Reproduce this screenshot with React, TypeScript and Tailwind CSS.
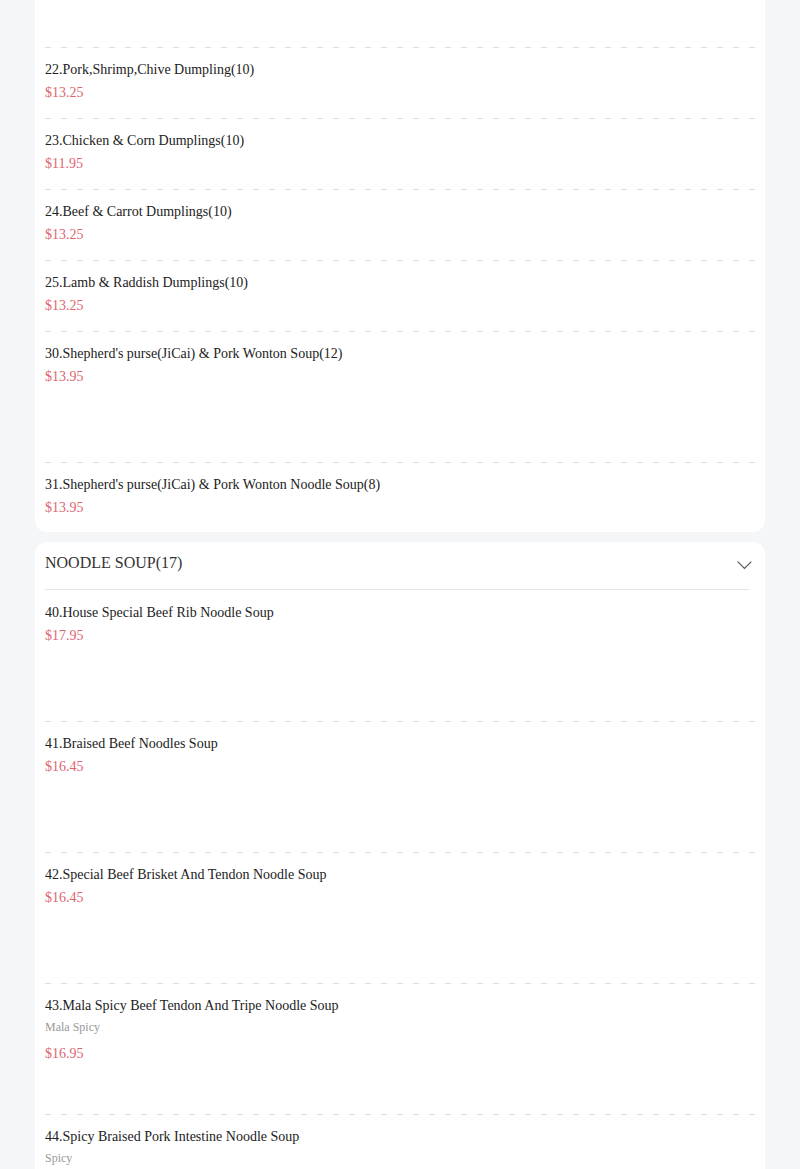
import React from "react";

type Item = { name: string; price: string; desc?: string; tall?: boolean };

const dumplings: Item[] = [
  { name: "22.Pork,Shrimp,Chive Dumpling(10)", price: "$13.25" },
  { name: "23.Chicken & Corn Dumplings(10)", price: "$11.95" },
  { name: "24.Beef & Carrot Dumplings(10)", price: "$13.25" },
  { name: "25.Lamb & Raddish Dumplings(10)", price: "$13.25" },
  { name: "30.Shepherd's purse(JiCai) & Pork Wonton Soup(12)", price: "$13.95", tall: true },
  { name: "31.Shepherd's purse(JiCai) & Pork Wonton Noodle Soup(8)", price: "$13.95" },
];

const noodles: Item[] = [
  { name: "40.House Special Beef Rib Noodle Soup", price: "$17.95", tall: true },
  { name: "41.Braised Beef Noodles Soup", price: "$16.45", tall: true },
  { name: "42.Special Beef Brisket And Tendon Noodle Soup", price: "$16.45", tall: true },
  { name: "43.Mala Spicy Beef Tendon And Tripe Noodle Soup", desc: "Mala Spicy", price: "$16.95", tall: true },
  { name: "44.Spicy Braised Pork Intestine Noodle Soup", desc: "Spicy", price: "$15.95", tall: true },
];

function Dash() {
  return (
    <div className="mx-[10px] h-px bg-[repeating-linear-gradient(to_right,#dedede_0,#dedede_6px,transparent_6px,transparent_16px)]" />
  );
}

function Row({ item, first, last }: { item: Item; first?: boolean; last?: boolean }) {
  return (
    <div>
      {!first && <Dash />}
      <div
        className={`px-[10px] ${first ? "pt-[13px] min-h-[131px]" : "pt-[12px]"} ${
          item.tall ? (first ? "" : "min-h-[130px]") : last ? "pb-[14px]" : "pb-[15px]"
        }`}
      >
        <div className="text-[14px] leading-[20px] text-[#222]">{item.name}</div>
        {item.desc && (
          <div className="mt-[2px] text-[12px] leading-[18px] text-[#999]">{item.desc}</div>
        )}
        <div className={`${item.desc ? "mt-[8px]" : "mt-[3px]"} text-[14px] leading-[20px] text-[#dd6570]`}>
          {item.price}
        </div>
      </div>
    </div>
  );
}

export default function App() {
  return (
    <div className="min-h-[1169px] bg-[#f5f6f8] px-[35px] font-['Liberation_Serif','Times_New_Roman',serif]">
      <div className="rounded-b-[12px] bg-white">
        <div className="h-[47px]" />
        {dumplings.map((it, i) => (
          <Row key={it.name} item={it} last={i === dumplings.length - 1} />
        ))}
      </div>
      <div className="mt-[10px] rounded-[12px] bg-white">
        <div className="flex items-center justify-between pl-[10px] pr-[13px] pt-[9px] pb-[14px]">
          <div className="text-[16px] leading-[24px] text-[#333]">NOODLE SOUP(17)</div>
          <svg width="15" height="9" viewBox="0 0 15 9" fill="none" className="mt-[5px]">
            <path d="M0.7 0.7 L7.5 7.5 L14.3 0.7" stroke="#555" strokeWidth="1.2" />
          </svg>
        </div>
        <div className="ml-[10px] mr-[16px] h-px bg-[#e4e4e4]" />
        {noodles.map((it, i) => (
          <Row key={it.name} item={it} first={i === 0} />
        ))}
      </div>
    </div>
  );
}
